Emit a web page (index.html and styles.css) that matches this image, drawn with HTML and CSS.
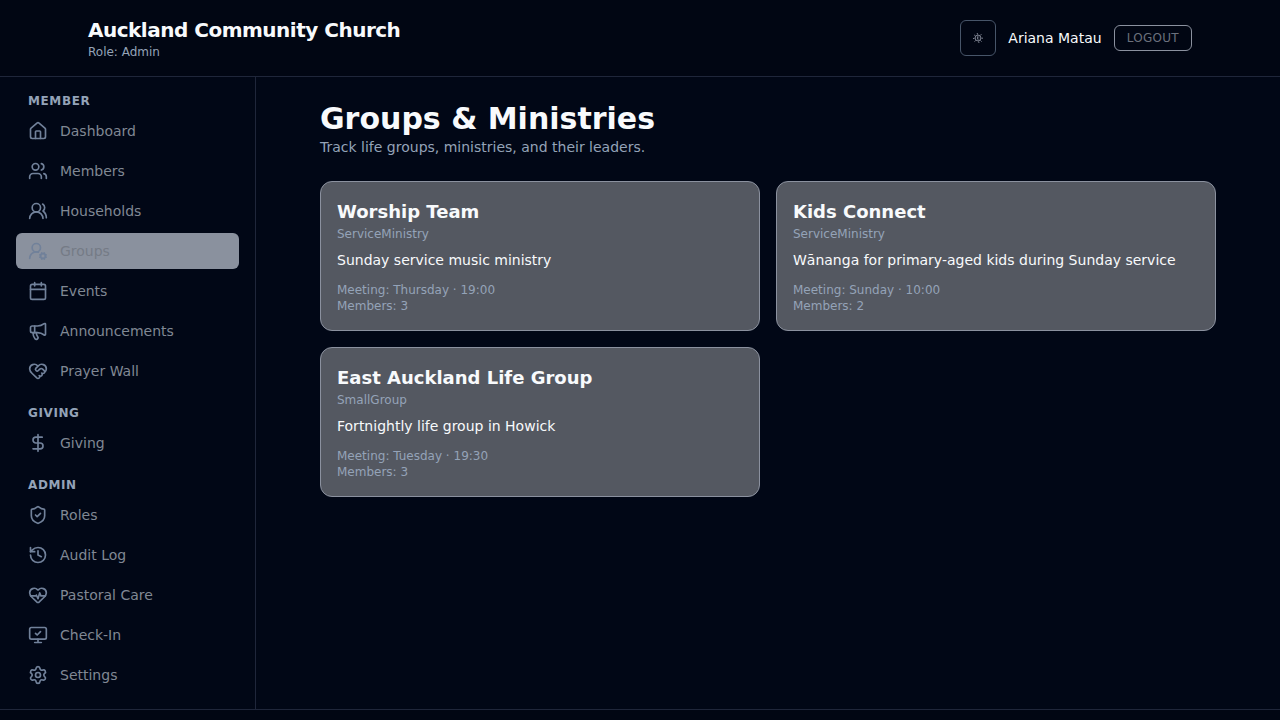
FILE: index.html
```html
<!DOCTYPE html>
<html lang="en">
<head>
<meta charset="utf-8">
<meta name="viewport" content="width=device-width, initial-scale=1">
<title>Groups &amp; Ministries</title>
<link rel="stylesheet" href="styles.css">
</head>
<body>
<header class="topbar">
  <div class="topbar-inner">
    <div>
      <p class="brand">Auckland Community Church</p>
      <p class="role">Role: Admin</p>
    </div>
    <div class="account">
      <button class="theme-toggle" type="button" aria-label="Toggle theme">
        <svg class="sun" viewBox="0 0 12 12" aria-hidden="true"><circle cx="6" cy="6" r="2.9"/><path d="M5.6 4.4v3M6.8 4.6v.8M6.4 7.2h.8M5.2 1l.4 1.6M6.6 9.4l.4 1.6M1 6.6l1.6-.4M9.4 6.2H11M2.2 3l1.2.8M8.4 8.4l1.2 1.2M2.6 9.6l1-1.2M8.4 3.4l1-1.2"/></svg>
      </button>
      <span class="user-name">Ariana Matau</span>
      <button class="logout" type="button">Logout</button>
    </div>
  </div>
</header>
<div class="layout">
  <nav class="sidebar" aria-label="Main">
    <section class="nav-group">
      <h2 class="nav-label">Member</h2>
      <a class="nav-link" href="#"><svg class="icon" viewBox="0 0 24 24"><path d="M15 21v-8a1 1 0 0 0-1-1h-4a1 1 0 0 0-1 1v8"/><path d="M3 10a2 2 0 0 1 .709-1.528l7-5.999a2 2 0 0 1 2.582 0l7 5.999A2 2 0 0 1 21 10v9a2 2 0 0 1-2 2H5a2 2 0 0 1-2-2z"/></svg>Dashboard</a>
      <a class="nav-link" href="#"><svg class="icon" viewBox="0 0 24 24"><path d="M16 21v-2a4 4 0 0 0-4-4H6a4 4 0 0 0-4 4v2"/><circle cx="9" cy="7" r="4"/><path d="M22 21v-2a4 4 0 0 0-3-3.87"/><path d="M16 3.13a4 4 0 0 1 0 7.75"/></svg>Members</a>
      <a class="nav-link" href="#"><svg class="icon" viewBox="0 0 24 24"><path d="M18 21a8 8 0 0 0-16 0"/><circle cx="10" cy="8" r="5"/><path d="M22 20c0-3.37-2-6.5-4-8a5 5 0 0 0-.45-8.3"/></svg>Households</a>
      <a class="nav-link active" href="#" aria-current="page"><svg class="icon" viewBox="0 0 24 24"><path d="M2 21a8 8 0 0 1 10.434-7.62"/><circle cx="10" cy="8" r="5"/><circle cx="18" cy="18" r="3"/><path d="m19.5 14.3-.4.9M16.9 20.8l-.3.9M21.7 19.5l-.9-.4M15.2 16.9l-.9-.3M21.7 16.6l-.9.3M15.2 19.1l-.9.4M19.5 21.7l-.4-1.1M16.9 15.2l-.4-.9"/></svg>Groups</a>
      <a class="nav-link" href="#"><svg class="icon" viewBox="0 0 24 24"><path d="M8 2v4M16 2v4"/><rect x="3" y="4" width="18" height="18" rx="2"/><path d="M3 10h18"/></svg>Events</a>
      <a class="nav-link" href="#"><svg class="icon" viewBox="0 0 24 24"><path d="M11 6a13 13 0 0 0 8.4-2.8A1 1 0 0 1 21 4v12a1 1 0 0 1-1.6.8A13 13 0 0 0 11 14H5a2 2 0 0 1-2-2V8a2 2 0 0 1 2-2z"/><path d="M6 14a12 12 0 0 0 2.4 7.2 2 2 0 0 0 3.2-2.4A8 8 0 0 1 10 14"/><path d="M8 6v8"/></svg>Announcements</a>
      <a class="nav-link" href="#"><svg class="icon" viewBox="0 0 24 24"><path d="M19.414 14.414C21 12.828 22 11.5 22 9.5a5.5 5.5 0 0 0-9.591-3.676.6.6 0 0 1-.818.001A5.5 5.5 0 0 0 2 9.5c0 2.3 1.5 4 3 5.5l5.535 5.362a2 2 0 0 0 2.879.052 2.12 2.12 0 0 0-.004-3 2.124 2.124 0 1 0 3-3 2.124 2.124 0 0 0 3.004 0 2 2 0 0 0 0-2.828l-1.881-1.882a2.41 2.41 0 0 0-3.409 0l-1.71 1.71a2 2 0 0 1-2.828 0 2 2 0 0 1 0-2.828l2.823-2.762"/></svg>Prayer Wall</a>
    </section>
    <section class="nav-group">
      <h2 class="nav-label">Giving</h2>
      <a class="nav-link" href="#"><svg class="icon" viewBox="0 0 24 24"><path d="M12 2v20M17 5H9.5a3.5 3.5 0 0 0 0 7h5a3.5 3.5 0 0 1 0 7H6"/></svg>Giving</a>
    </section>
    <section class="nav-group">
      <h2 class="nav-label">Admin</h2>
      <a class="nav-link" href="#"><svg class="icon" viewBox="0 0 24 24"><path d="M20 13c0 5-3.5 7.5-7.66 8.95a1 1 0 0 1-.67-.01C7.5 20.5 4 18 4 13V6a1 1 0 0 1 1-1c2 0 4.5-1.2 6.24-2.72a1.17 1.17 0 0 1 1.52 0C14.51 3.81 17 5 19 5a1 1 0 0 1 1 1z"/><path d="m9 12 2 2 4-4"/></svg>Roles</a>
      <a class="nav-link" href="#"><svg class="icon" viewBox="0 0 24 24"><path d="M3 12a9 9 0 1 0 9-9 9.75 9.75 0 0 0-6.74 2.74L3 8"/><path d="M3 3v5h5M12 7v5l4 2"/></svg>Audit Log</a>
      <a class="nav-link" href="#"><svg class="icon" viewBox="0 0 24 24"><path d="M2 9.5a5.5 5.5 0 0 1 9.591-3.676.56.56 0 0 0 .818 0A5.49 5.49 0 0 1 22 9.5c0 2.29-1.5 4-3 5.5l-5.492 5.313a2 2 0 0 1-3 .019L5 15c-1.5-1.5-3-3.2-3-5.5"/><path d="M3.22 13H9.5l.5-1 2 4.5 2-7 1.5 3.5h5.27"/></svg>Pastoral Care</a>
      <a class="nav-link" href="#"><svg class="icon" viewBox="0 0 24 24"><path d="m9 10 2 2 4-4"/><rect x="2" y="3" width="20" height="14" rx="2"/><path d="M12 17v4M8 21h8"/></svg>Check-In</a>
      <a class="nav-link" href="#"><svg class="icon" viewBox="0 0 24 24"><path d="M9.671 4.136a2.34 2.34 0 0 1 4.659 0 2.34 2.34 0 0 0 3.319 1.915 2.34 2.34 0 0 1 2.33 4.033 2.34 2.34 0 0 0 0 3.831 2.34 2.34 0 0 1-2.33 4.033 2.34 2.34 0 0 0-3.319 1.915 2.34 2.34 0 0 1-4.659 0 2.34 2.34 0 0 0-3.32-1.915 2.34 2.34 0 0 1-2.33-4.033 2.34 2.34 0 0 0 0-3.831A2.34 2.34 0 0 1 6.35 6.051a2.34 2.34 0 0 0 3.319-1.915"/><circle cx="12" cy="12" r="3"/></svg>Settings</a>
    </section>
  </nav>
  <main class="content">
    <h1 class="page-title">Groups &amp; Ministries</h1>
    <p class="page-subtitle">Track life groups, ministries, and their leaders.</p>
    <div class="cards">
      <article class="card">
        <h2 class="card-title">Worship Team</h2>
        <p class="card-meta">ServiceMinistry</p>
        <p class="card-text">Sunday service music ministry</p>
        <p class="card-meta">Meeting: Thursday · 19:00</p>
        <p class="card-meta">Members: 3</p>
      </article>
      <article class="card">
        <h2 class="card-title">Kids Connect</h2>
        <p class="card-meta">ServiceMinistry</p>
        <p class="card-text">Wānanga for primary-aged kids during Sunday service</p>
        <p class="card-meta">Meeting: Sunday · 10:00</p>
        <p class="card-meta">Members: 2</p>
      </article>
      <article class="card">
        <h2 class="card-title">East Auckland Life Group</h2>
        <p class="card-meta">SmallGroup</p>
        <p class="card-text">Fortnightly life group in Howick</p>
        <p class="card-meta">Meeting: Tuesday · 19:30</p>
        <p class="card-meta">Members: 3</p>
      </article>
    </div>
  </main>
</div>
<footer class="footer"></footer>
</body>
</html>
```
FILE: styles.css
```css
*, *::before, *::after { box-sizing: border-box; }
h1, h2, p { margin: 0; }

body {
  margin: 0;
  min-height: 100vh;
  display: flex;
  flex-direction: column;
  background: #010716;
  color: #f8fafc;
  font: 14px/20px "DejaVu Sans", sans-serif;
}

.topbar {
  background: #010613;
  border-bottom: 1px solid #1f263a;
  backdrop-filter: blur(8px);
}
.topbar-inner {
  max-width: 1152px;
  margin: 0 auto;
  padding: 16px 24px;
  display: flex;
  align-items: center;
  justify-content: space-between;
}
.brand { font-size: 20px; line-height: 28px; font-weight: 700; letter-spacing: -0.025em; }
.role { font-size: 12px; line-height: 16px; color: #94a3b8; }
.account { display: flex; align-items: center; gap: 12px; }
.theme-toggle {
  width: 36px;
  height: 36px;
  padding: 0;
  display: grid;
  place-items: center;
  border: 1px solid #475569;
  border-radius: 6px;
  background: transparent;
  color: #8b919f;
}
.sun { width: 12px; height: 12px; fill: none; stroke: currentColor; stroke-width: 0.9; }
.logout {
  padding: 4px 12px;
  border: 1px solid #8b919f;
  border-radius: 6px;
  background: transparent;
  color: #6b707c;
  font: 12px/16px "DejaVu Sans", sans-serif;
  letter-spacing: 0.025em;
  text-transform: uppercase;
}

.layout { display: flex; }
.sidebar {
  flex: 0 0 256px;
  padding: 16px;
  display: flex;
  flex-direction: column;
  gap: 16px;
  border-right: 1px solid #1f263a;
}
.nav-group { display: flex; flex-direction: column; gap: 4px; }
.nav-label {
  padding: 0 12px;
  font-size: 12px;
  line-height: 16px;
  font-weight: 700;
  letter-spacing: 0.05em;
  text-transform: uppercase;
  color: #94a3b8;
}
.nav-link {
  display: flex;
  align-items: center;
  gap: 12px;
  padding: 8px 12px;
  border-radius: 6px;
  color: #808894;
  text-decoration: none;
}
.nav-link.active { background: #8a919e; color: #757b86; }
.icon {
  width: 20px;
  height: 20px;
  fill: none;
  stroke: #71819a;
  stroke-width: 2;
  stroke-linecap: round;
  stroke-linejoin: round;
}

.content { flex: 1; padding: 24px 64px; }
.page-title { font-size: 30px; line-height: 36px; font-weight: 700; }
.page-subtitle { color: #94a3b8; }
.cards {
  margin-top: 24px;
  display: grid;
  grid-template-columns: repeat(2, minmax(0, 1fr));
  gap: 16px;
}
.card {
  padding: 16px;
  border: 1px solid #8b919f;
  border-radius: 12px;
  background: #545861;
}
.card-title { font-size: 18px; line-height: 28px; font-weight: 600; }
.card-meta { font-size: 12px; line-height: 16px; color: #94a3b8; }
.card-text { margin: 8px 0 12px; }

.footer { flex: 1; border-top: 1px solid #1f263a; background: #010613; }
```
